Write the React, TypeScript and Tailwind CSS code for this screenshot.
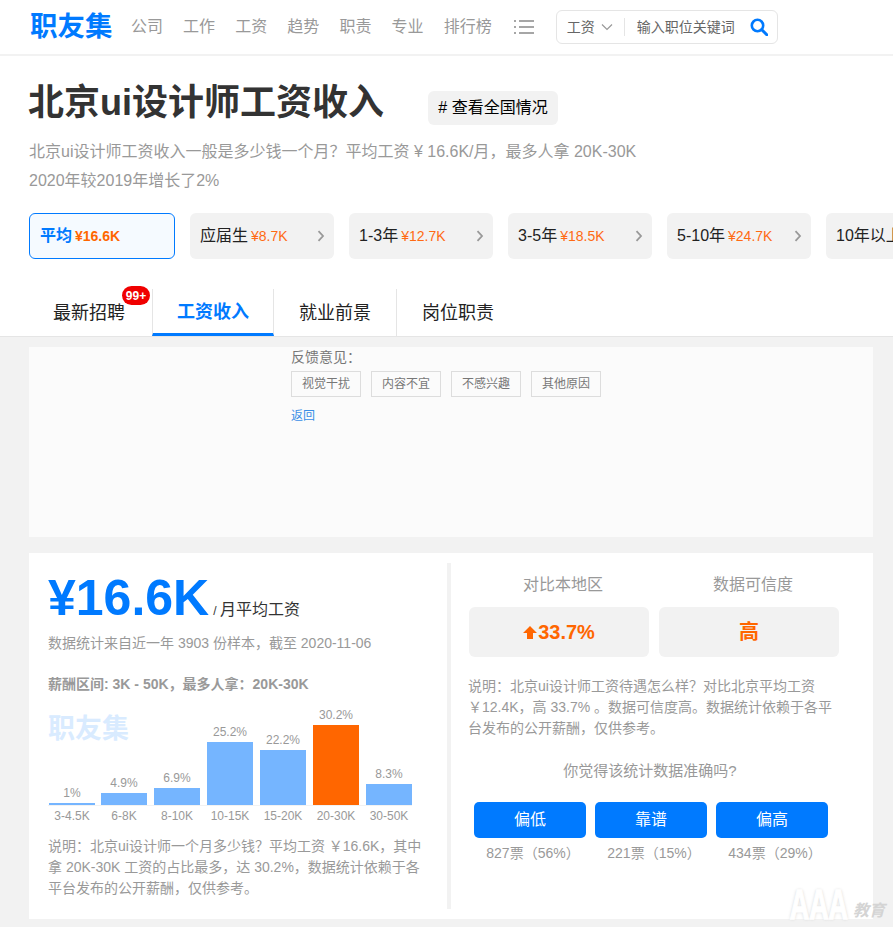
import React from "react";

const font = { fontFamily: '"Liberation Sans","Noto Sans CJK SC",sans-serif' };

const nav = ["公司", "工作", "工资", "趋势", "职责", "专业", "排行榜"];
const levels = [
  { name: "应届生", pay: "¥8.7K" },
  { name: "1-3年", pay: "¥12.7K" },
  { name: "3-5年", pay: "¥18.5K" },
  { name: "5-10年", pay: "¥24.7K" },
];
const bars = [
  { label: "3-4.5K", pct: "1%", h: 2 },
  { label: "6-8K", pct: "4.9%", h: 12 },
  { label: "8-10K", pct: "6.9%", h: 17 },
  { label: "10-15K", pct: "25.2%", h: 63 },
  { label: "15-20K", pct: "22.2%", h: 55 },
  { label: "20-30K", pct: "30.2%", h: 80, hot: true },
  { label: "30-50K", pct: "8.3%", h: 21 },
];
const votes = [
  { t: "偏低", v: "827票（56%）" },
  { t: "靠谱", v: "221票（15%）" },
  { t: "偏高", v: "434票（29%）" },
];

function Chevron() {
  return (
    <svg width="8" height="12" viewBox="0 0 8 12" className="shrink-0">
      <path d="M1.5 1.2 6 6l-4.500 4.800" fill="none" stroke="#999" strokeWidth="1.800" />
    </svg>
  );
}

export default function App() {
  return (
    <div style={font} className="relative h-[927px] w-[893px] overflow-hidden bg-[#f2f2f2]">
      <div className="bg-white">
        <header className="flex h-[56px] items-center border-b-2 border-[#f2f2f2] pl-[30px]">
          <div className="w-[101px] text-[27.500px] leading-[50px] font-bold text-[#007aff]">职友集</div>
          <nav className="flex gap-[20.100px] text-[16px] text-[#999]">
            {nav.map((n) => (
              <span key={n}>{n}</span>
            ))}
          </nav>
          <svg width="20" height="16" viewBox="0 0 20 16" className="ml-[22px]">
            <g fill="#a6a6a6">
              <rect x="0" y="1" width="2" height="2" />
              <rect x="5" y="1" width="15" height="2" />
              <rect x="0" y="7" width="2" height="2" />
              <rect x="5" y="7" width="15" height="2" />
              <rect x="0" y="13" width="2" height="2" />
              <rect x="5" y="13" width="15" height="2" />
            </g>
          </svg>
          <div className="ml-[22px] flex h-[34px] w-[222px] items-center rounded-[6px] border border-[#e5e5e5] pl-[10px]">
            <span className="text-[14px] text-[#666]">工资</span>
            <svg width="12" height="8" viewBox="0 0 12 8" className="ml-[6px]">
              <path d="m1 1.500 5 5 5-5" fill="none" stroke="#999" strokeWidth="1.200" />
            </svg>
            <span className="ml-[11px] h-[18px] w-px bg-[#e5e5e5]" />
            <span className="ml-[12px] text-[14px] whitespace-nowrap text-[#666]">输入职位关键词</span>
            <svg width="18" height="18" viewBox="0 0 18 18" className="ml-[15px] shrink-0">
              <circle cx="7.500" cy="7.500" r="5.700" fill="none" stroke="#007aff" strokeWidth="2.600" />
              <path d="m11.800 11.800 5 5" stroke="#007aff" strokeWidth="3" strokeLinecap="round" />
            </svg>
          </div>
        </header>

        <section className="pl-[29px]">
          <div className="mt-[28px] flex items-start">
            <h1 className="ml-[-1px] text-[36px] leading-[38px] font-bold text-[#333]">北京ui设计师工资收入</h1>
            <span className="mt-[7px] ml-[44px] flex h-[34px] w-[130px] items-center justify-center rounded-[6px] bg-[#f2f2f2] text-[16px] text-black">
              # 查看全国情况
            </span>
          </div>
          <div className="mt-[12px] text-[16px] leading-[29px] text-[#999]">
            <p>北京ui设计师工资收入一般是多少钱一个月？平均工资 ¥ 16.6K/月，最多人拿 20K-30K</p>
            <p>2020年较2019年增长了2%</p>
          </div>

          <div className="mt-[18px] flex gap-[15px] overflow-hidden">
            <div className="flex h-[46px] w-[146px] shrink-0 items-center rounded-[6px] border border-[#007aff] bg-[#f5faff] pl-[10px]">
              <span className="text-[16px] font-bold text-[#007aff]">平均</span>
              <span className="ml-[3px] text-[14px] font-bold text-[#ff6600]">¥16.6K</span>
            </div>
            {levels.map((l) => (
              <div key={l.name} className="flex h-[46px] w-[144px] shrink-0 items-center rounded-[6px] bg-[#f2f2f2] pl-[10px] pr-[9px]">
                <span className="text-[16px] text-[#222]">{l.name}</span>
                <span className="ml-[3px] text-[14px] text-[#ff6a13]">{l.pay}</span>
                <span className="ml-auto">
                  <Chevron />
                </span>
              </div>
            ))}
            <div className="flex h-[46px] w-[67px] shrink-0 items-center overflow-hidden rounded-l-[6px] bg-[#f2f2f2] pl-[10px] text-[16px] whitespace-nowrap text-[#222]">
              10年以上
            </div>
          </div>

          <div className="relative mt-[30px] flex h-[47px] items-stretch text-[18px] text-[#222]">
            <div className="flex w-[123px] items-center justify-center pt-[2px] pr-[3px]">最新招聘</div>
            <div className="flex w-[122px] items-center justify-center border-x border-[#e5e5e5] border-b-[3px] border-b-[#007aff] pt-[3px] font-bold text-[#007aff]">
              工资收入
            </div>
            <div className="flex w-[123px] items-center justify-center border-r border-[#e5e5e5] pt-[2px]">就业前景</div>
            <div className="flex w-[122px] items-center justify-center pt-[2px]">岗位职责</div>
            <span className="absolute top-[-3px] left-[93px] flex h-[19px] w-[28px] items-center justify-center rounded-full bg-[#f00000] text-[12px] font-bold text-white">
              99+
            </span>
          </div>
        </section>
      </div>

      <main className="border-t border-[#e5e5e5] pt-[10px] pr-[20px] pl-[29px]">
        <div className="h-[190px] bg-[#fbfbfb] pl-[262px]">
          <div className="text-[14px] leading-[20px] text-[#777]">反馈意见：</div>
          <div className="mt-[4px] flex gap-[10px]">
            {["视觉干扰", "内容不宜", "不感兴趣", "其他原因"].map((t) => (
              <span key={t} className="flex h-[26px] w-[70px] items-center justify-center border border-[#ddd] text-[12px] text-[#777]">
                {t}
              </span>
            ))}
          </div>
          <div className="mt-[10px] text-[12px] leading-[18px] text-[#3a8ee6]">返回</div>
        </div>

        <div className="mt-[16px] flex h-[366px] bg-white py-[10px]">
          <div className="relative w-[418px] pt-[7px] pl-[19px]">
            <div className="flex items-end">
              <span className="text-[50px] leading-[56px] font-bold text-[#007aff]">¥16.6K</span>
              <span className="mb-[5px] ml-[4px] text-[16px] leading-[20px] text-[#333]">
                <span className="text-[12px]">/ </span>月平均工资
              </span>
            </div>
            <p className="mt-[7px] text-[14px] leading-[20px] text-[#999]">数据统计来自近一年 3903 份样本，截至 2020-11-06</p>
            <p className="mt-[21px] text-[14px] leading-[20px] font-bold text-[#999]">薪酬区间: 3K - 50K，最多人拿：20K-30K</p>
            <div className="absolute top-[149px] left-[19px] text-[27px] leading-[34px] font-bold text-[#d9ebff]">职友集</div>
            <div className="mt-[12px] flex h-[100px] w-[364px] items-end gap-[7px] border-b border-[#f2f2f2] pl-[1px]">
              {bars.map((b, i) => (
                <div key={b.label} className={i === 0 ? "mr-[-1px] flex w-[46px] shrink-0 flex-col items-center" : "flex w-[46px] shrink-0 flex-col items-center"}>
                  <span className="text-[12px] leading-[20px] text-[#999]">{b.pct}</span>
                  <div
                    className={b.hot ? "w-[46px] bg-[#ff6600]" : "w-[46px] bg-[#75b5ff]"}
                    style={{ height: b.h }}
                  />
                </div>
              ))}
            </div>
            <div className="flex w-[364px] gap-[7px] pl-[1px]">
              {bars.map((b, i) => (
                <span key={b.label} className={i === 0 ? "mr-[-1px] w-[46px] shrink-0 text-center text-[12px] leading-[20px] whitespace-nowrap text-[#999]" : "w-[46px] shrink-0 text-center text-[12px] leading-[20px] whitespace-nowrap text-[#999]"}>
                  {b.label}
                </span>
              ))}
            </div>
            <p className="mt-[10px] w-[380px] text-[14px] leading-[21px] text-[#999]">
              说明：北京ui设计师一个月多少钱？平均工资 ￥16.6K，其中拿 20K-30K 工资的占比最多，达 30.2%，数据统计依赖于各平台发布的公开薪酬，仅供参考。
            </p>
          </div>

          <div className="w-[4px] shrink-0 bg-[#f2f2f2]" />

          <div className="pl-[18px]">
            <div className="ml-[4px] flex gap-[10px] pt-[11px] text-center text-[16px] leading-[22px] text-[#999]">
              <span className="w-[180px]">对比本地区</span>
              <span className="w-[180px]">数据可信度</span>
            </div>
            <div className="mt-[11px] flex gap-[10px]">
              <div className="flex h-[50px] w-[180px] items-center justify-center rounded-[6px] bg-[#f2f2f2] text-[20px] font-bold text-[#ff6600]">
                <svg width="14" height="13" viewBox="0 0 14 13" className="mt-[1px] mr-[1px]">
                  <path d="M7 0 14 7H10V13H4V7H0Z" fill="#ff6600" />
                </svg>
                33.7%
              </div>
              <div className="flex h-[50px] w-[180px] items-center justify-center rounded-[6px] bg-[#f2f2f2] text-[20px] font-bold text-[#ff6600]">
                高
              </div>
            </div>
            <p className="mt-[19px] ml-[-1px] w-[366px] text-[14px] leading-[21px] text-[#999]">
              说明：北京ui设计师工资待遇怎么样？对比北京平均工资 ￥12.4K，高 33.7% 。数据可信度高。数据统计依赖于各平台发布的公开薪酬，仅供参考。
            </p>
            <p className="mt-[21px] w-[362px] text-center text-[15px] leading-[22px] text-[#999]">你觉得该统计数据准确吗?</p>
            <div className="mt-[20px] flex gap-[9px] pl-[5px]">
              {votes.map((v) => (
                <div key={v.t} className="w-[112px]">
                  <button className="h-[36px] w-[112px] rounded-[5px] bg-[#007aff] text-[16px] text-white">{v.t}</button>
                  <div className="mt-[5px] pl-[6px] text-center text-[14px] leading-[20px] whitespace-nowrap text-[#999]">{v.v}</div>
                </div>
              ))}
            </div>
          </div>
        </div>
      </main>

      <div className="absolute right-[8px] bottom-[6px] flex items-end">
        <span className="origin-right scale-x-[0.64] text-[42px] leading-[32px] font-bold text-white [-webkit-text-stroke:1.500px_white] [text-shadow:0_0_4px_rgba(0,0,0,0.22)]">AAA</span>
        <span className="ml-[5px] text-[16px] leading-[20px] font-bold text-[#d4d4d4] italic">教育</span>
      </div>
    </div>
  );
}
